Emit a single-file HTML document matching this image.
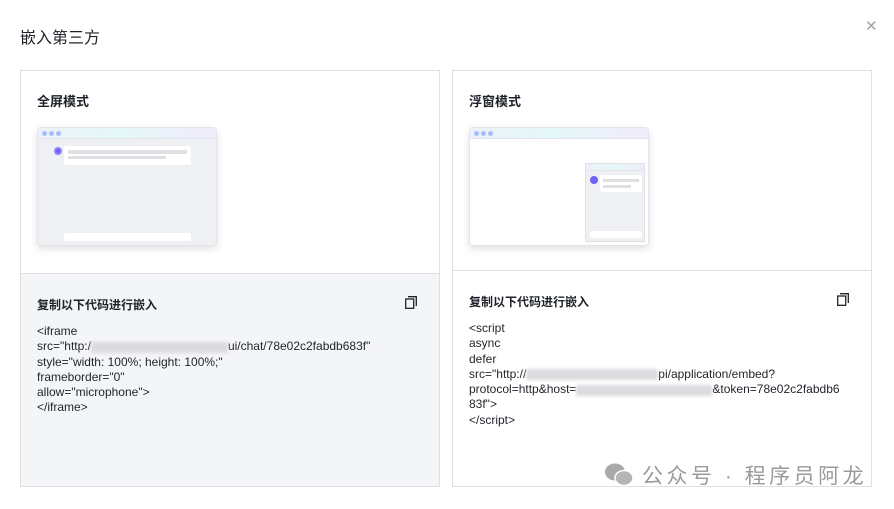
<!DOCTYPE html>
<html><head><meta charset="utf-8"><style>
*{box-sizing:border-box;margin:0;padding:0}
body{width:894px;height:509px;background:#fff;font-family:"Liberation Sans","Noto Sans CJK SC",sans-serif;position:relative;overflow:hidden;color:#1f2329}
.title{position:absolute;left:20px;top:24px;font-size:16px;color:#1f2329}
.close{position:absolute;left:865px;top:17px;font-size:15px;color:#a0a4aa;font-weight:300}
.card{position:absolute;top:70px;width:420px;height:417px;border:1px solid #dee0e3;overflow:hidden}
.top{height:203px;background:#fff;border-bottom:1px solid #dee0e3;position:relative}
.h{position:absolute;left:16px;top:20px;font-size:13px;font-weight:bold;color:#1f2329}
.bot{position:relative;height:212px}
.bh{position:absolute;left:16px;top:22px;font-size:12px;font-weight:bold}
.code{position:absolute;left:16px;top:50px;font-size:12px;line-height:15.3px;color:#1f2329;white-space:pre}
.copy{position:absolute;right:22px;top:22px;width:12px;height:13px}
.mock{position:absolute;left:16px;top:56px;width:180px;height:119px;border-radius:4px;box-shadow:0 3px 8px rgba(0,0,0,.12);border:1px solid #e3e5e9;overflow:hidden}
.bar{height:11px;background:linear-gradient(90deg,#eef1fb,#e4f8f7 45%,#f0ebfb);border-bottom:1px solid #e2e5ea;position:relative}
.dot{position:absolute;top:3px;width:5px;height:5px;border-radius:50%;background:#a9bdfa}
.b{display:inline-block;vertical-align:middle;height:11px;background:#dadbde;filter:blur(1.5px)}
</style></head><body>
<div class="title">嵌入第三方</div>
<div class="close">✕</div>

<div class="card" style="left:20px">
 <div class="top"><div class="h">全屏模式</div>
  <div class="mock" style="background:#eff0f3">
   <div class="bar"><span class="dot" style="left:4px"></span><span class="dot" style="left:11px"></span><span class="dot" style="left:18px"></span></div>
   <div style="position:absolute;left:16px;top:19px;width:8px;height:8px;border-radius:50%;background:#6f63f5;border:2px solid #8c82ff"></div>
   <div style="position:absolute;left:26px;top:18px;width:127px;height:19px;background:#fff;border-radius:2px"><div style="margin:4px 4px 0;height:4px;background:#dfe0e3"></div><div style="margin:2px 4px 0;width:98px;height:3px;background:#dfe0e3"></div></div>
   <div style="position:absolute;left:26px;top:105px;width:127px;height:8px;background:#fff;border-radius:2px"></div>
  </div>
 </div>
 <div class="bot" style="background:#f4f5f7">
  <div class="bh">复制以下代码进行嵌入</div>
  <svg class="copy" viewBox="0 0 12 13"><rect x="0.7" y="3" width="8" height="9.3" fill="none" stroke="#1f2329" stroke-width="1.3"/><path d="M3 0.7H11.3V10" fill="none" stroke="#1f2329" stroke-width="1.3"/></svg>
  <div class="code">&lt;iframe
src="http:/<span class="b" style="width:137px"></span>ui/chat/78e02c2fabdb683f"
style="width: 100%; height: 100%;"
frameborder="0"
allow="microphone"&gt;
&lt;/iframe&gt;</div>
 </div>
</div>

<div class="card" style="left:452px">
 <div class="top" style="height:200px"><div class="h">浮窗模式</div>
  <div class="mock" style="background:#fff">
   <div class="bar"><span class="dot" style="left:4px"></span><span class="dot" style="left:11px"></span><span class="dot" style="left:18px"></span></div>
   <div style="position:absolute;left:115px;top:35px;width:60px;height:79px;background:#eff0f3;border:1px solid #dfe1e5">
    <div style="height:7px;background:linear-gradient(90deg,#eef1fb,#e4f8f7 50%,#f0ebfb);border-bottom:1px solid #e2e5ea"></div>
    <div style="position:absolute;left:4px;top:12px;width:8px;height:8px;border-radius:50%;background:#6f63f5"></div>
    <div style="position:absolute;left:14px;top:11px;width:42px;height:17px;background:#fff;border-radius:2px"><div style="margin:4px 3px 0;height:3px;background:#dfe0e3"></div><div style="margin:3px 3px 0;width:28px;height:3px;background:#dfe0e3"></div></div>
    <div style="position:absolute;left:4px;top:67px;width:52px;height:7px;background:#fff;border-radius:2px"></div>
   </div>
  </div>
 </div>
 <div class="bot" style="height:215px;background:#fff">
  <div class="bh" style="top:22px">复制以下代码进行嵌入</div>
  <svg class="copy" viewBox="0 0 12 13"><rect x="0.7" y="3" width="8" height="9.3" fill="none" stroke="#1f2329" stroke-width="1.3"/><path d="M3 0.7H11.3V10" fill="none" stroke="#1f2329" stroke-width="1.3"/></svg>
  <div class="code">&lt;script
async
defer
src="http://<span class="b" style="width:132px"></span>pi/application/embed?
protocol=http&amp;host=<span class="b" style="width:136px"></span>&amp;token=78e02c2fabdb6
83f"&gt;
&lt;/script&gt;</div>
 </div>
</div>

<div style="position:absolute;left:604px;top:460px;font-size:21px;color:#9a9a9a;letter-spacing:3.5px;display:flex;align-items:center;white-space:nowrap">
 <svg width="30" height="26" viewBox="0 0 30 26" style="margin-right:8px"><ellipse cx="11" cy="10" rx="10" ry="8.5" fill="#a9a9a9"/><ellipse cx="20" cy="16" rx="9" ry="7.5" fill="#b5b5b5" stroke="#fff" stroke-width="1.5"/></svg>
 公众号 · 程序员阿龙</div>
</body></html>
